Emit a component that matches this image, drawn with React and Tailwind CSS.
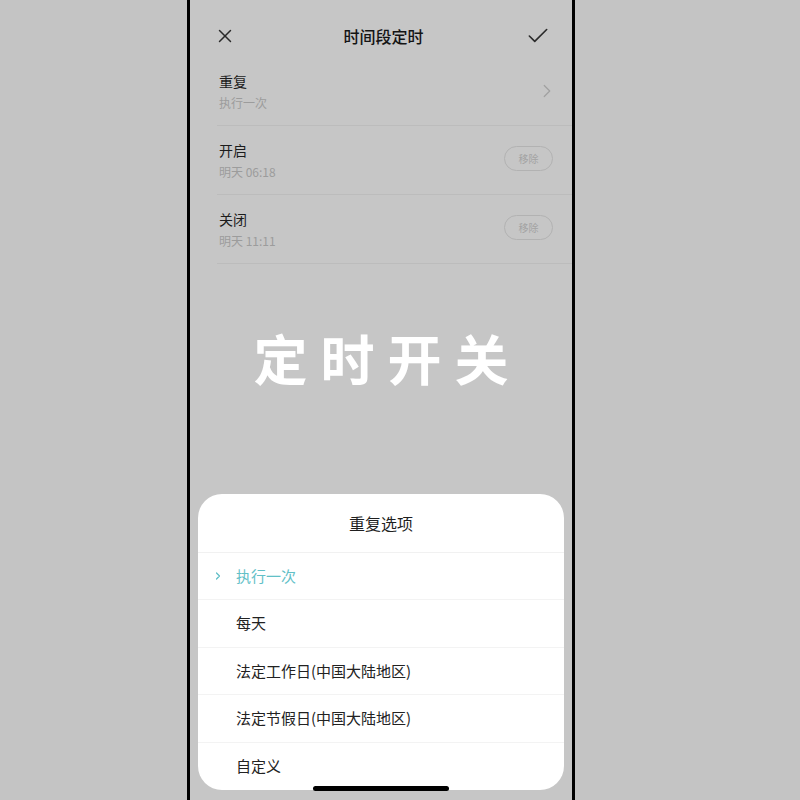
import { X, Check, ChevronRight } from "lucide-react";

// 时间段定时页面 + 底部"重复选项"弹层
const rows = [
  { title: "重复", sub: "执行一次", action: "arrow" },
  { title: "开启", sub: "明天 06:18", action: "remove" },
  { title: "关闭", sub: "明天 11:11", action: "remove" },
];

const options = [
  "执行一次",
  "每天",
  "法定工作日(中国大陆地区)",
  "法定节假日(中国大陆地区)",
  "自定义",
];

export default function App() {
  const selected = 0;

  return (
    <div
      className="w-[800px] h-[800px] bg-[#c4c4c4] flex overflow-hidden"
      style={{ fontFamily: '"Noto Sans CJK SC", "Noto Sans", sans-serif' }}
    >
      {/* 手机屏幕 (已变暗) */}
      <div className="relative w-[388px] h-[800px] ml-[187px] border-x-[3px] border-black bg-[#c6c6c6] flex flex-col">
        {/* 顶部导航 */}
        <div className="h-[57px] pt-[20px] flex items-start justify-between pl-[24px] pr-[21px]">
          <div className="h-[32px] flex items-center">
            <X className="w-[22px] h-[22px] text-[#2a2a2a]" strokeWidth={1.6} />
          </div>
          <div className="h-[32px] flex items-center text-[16px] font-medium text-[#141414] ml-[6px]">时间段定时</div>
          <div className="h-[32px] flex items-center">
            <Check className="w-[26px] h-[26px] text-[#2a2a2a]" strokeWidth={1.5} />
          </div>
        </div>

        {/* 设置列表 */}
        <div className="ml-[27px]">
          {rows.map((row) => (
            <div
              key={row.title}
              className="h-[69px] border-b border-[#bcbcbc] flex items-center justify-between pl-[2px] pr-[19px]"
            >
              <div className="flex flex-col pt-[1px]">
                <span className="text-[14px] leading-[20px] text-[#1c1c1c]">{row.title}</span>
                <span className="text-[12px] leading-[18px] mt-[3px] text-[#9c9c9c]">{row.sub}</span>
              </div>
              {row.action === "arrow" ? (
                <ChevronRight className="w-[22px] h-[22px] text-[#a0a0a0] mr-[-5px]" strokeWidth={1.3} />
              ) : (
                <div className="w-[49px] h-[25px] rounded-full border border-[#b2b2b2] flex items-center justify-center text-[10px] text-[#a3a3a3] mt-[-4px]">
                  移除
                </div>
              )}
            </div>
          ))}
        </div>

        {/* 大字标题 */}
        <div className="mt-[66px] text-center text-white font-bold text-[54px] leading-[56px] tracking-[13px] pl-[13px]">
          定时开关
        </div>

        <div className="flex-1" />

        {/* 底部弹层 */}
        <div className="mx-[8px] mb-[10px] h-[296px] bg-white rounded-[24px] flex flex-col overflow-hidden">
          <div className="h-[59px] border-b border-[#f1f1f1] flex items-center justify-center text-[16px] text-[#1f1f1f]">
            重复选项
          </div>
          {options.map((opt, i) => (
            <div
              key={opt}
              className={`h-[47.5px] flex items-center ${i < options.length - 1 ? "border-b border-[#f3f3f3]" : ""}`}
            >
              <div className="w-[38px] flex justify-end pr-[12px]">
                {i === selected && (
                  <ChevronRight className="w-[12px] h-[12px] text-[#5fbec6]" strokeWidth={2.5} />
                )}
              </div>
              <span className={`text-[15px] ${i === selected ? "text-[#62c0c7]" : "text-[#222222]"}`}>{opt}</span>
            </div>
          ))}
        </div>

        {/* 底部横条 */}
        <div className="absolute left-1/2 -translate-x-1/2 bottom-[9px] w-[136px] h-[5px] rounded-full bg-black" />
      </div>
    </div>
  );
}
